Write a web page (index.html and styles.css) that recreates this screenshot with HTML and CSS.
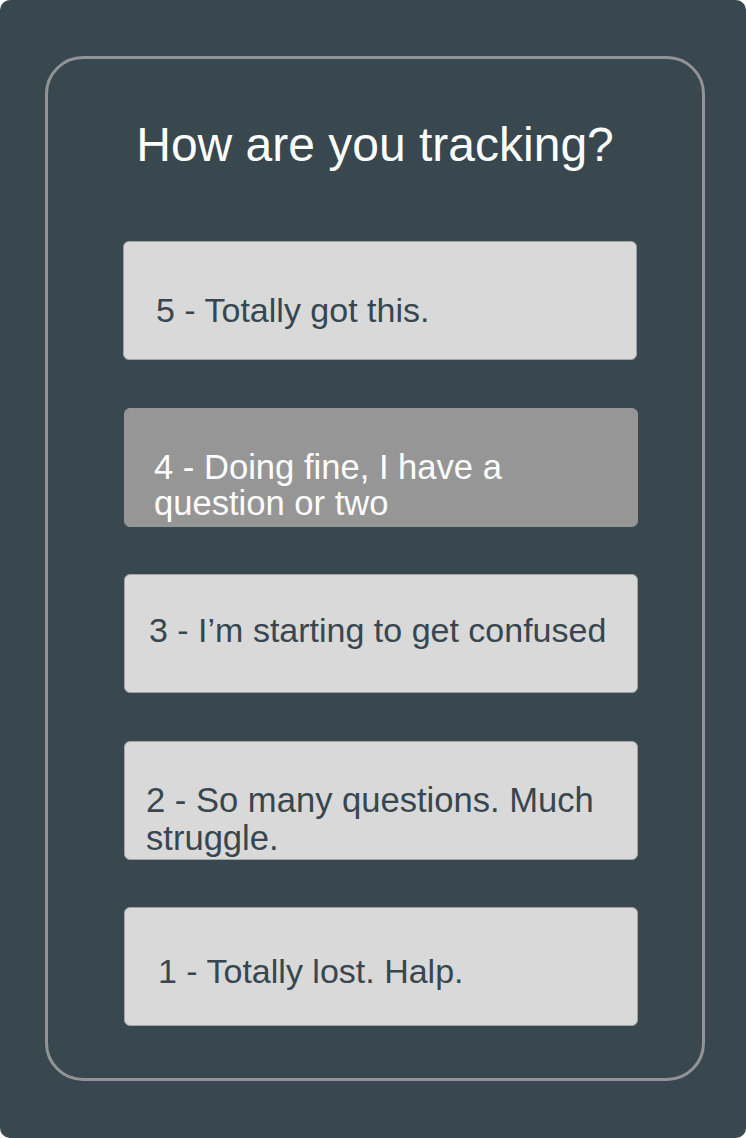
FILE: index.html
```html
<!DOCTYPE html>
<html lang="en">
<head>
<meta charset="utf-8">
<title>How are you tracking?</title>
<link rel="stylesheet" href="styles.css">
</head>
<body>
<div class="screen">
  <div class="frame">
    <h1 class="title">How are you tracking?</h1>
    <div class="options">
      <button class="option option--5"><span class="option__label">5 - Totally got this.</span></button>
      <button class="option option--4 option--active"><span class="option__label">4 - Doing fine, I have a question or two</span></button>
      <button class="option option--3"><span class="option__label">3 - I’m starting to get confused</span></button>
      <button class="option option--2"><span class="option__label">2 - So many questions. Much struggle.</span></button>
      <button class="option option--1"><span class="option__label">1 - Totally lost. Halp.</span></button>
    </div>
  </div>
</div>
</body>
</html>
```

FILE: styles.css
```css
html, body {
  margin: 0;
  padding: 0;
  background: #ffffff;
}

.screen {
  box-sizing: border-box;
  width: 746px;
  height: 1138px;
  background: #39474f;
  border-radius: 10px;
  padding: 56px 41px 57px 45px;
  font-family: "Liberation Sans", Arial, sans-serif;
}

.frame {
  box-sizing: border-box;
  height: 1025px;
  border: 3px solid #929394;
  border-radius: 38px;
  padding-top: 58px;
}

.title {
  margin: 0;
  font-size: 48px;
  font-weight: normal;
  line-height: 56px;
  color: #ffffff;
  text-align: center;
}

.options {
  display: flex;
  flex-direction: column;
  gap: 47.5px;
  margin-top: 68px;
  padding-left: 76px;
}

.option {
  box-sizing: border-box;
  display: flex;
  align-items: flex-start;
  width: 514px;
  height: 119px;
  margin: 0;
  border: 1px solid #a3a3a3;
  border-radius: 6px;
  background: #d9d9d9;
  color: #38474f;
  font-family: "Liberation Sans", Arial, sans-serif;
  font-size: 34px;
  line-height: 37px;
  text-align: left;
  padding-right: 20px;
  padding-bottom: 0;
  cursor: pointer;
}

.option__label {
  display: block;
}

.option--active {
  background: #969696;
  border-color: #969696;
  color: #ffffff;
}

.option--5 {
  margin-left: -1px;
  padding-top: 50px;
  padding-left: 32px;
}

.option--4 {
  font-size: 34.6px;
  line-height: 36px;
  padding-top: 40.4px;
  padding-left: 29px;
  padding-right: 82px;
}

.option--3 {
  padding-top: 37px;
  padding-left: 24px;
}

.option--2 {
  font-size: 34.6px;
  line-height: 38px;
  padding-top: 39px;
  padding-left: 21px;
}

.option--1 {
  padding-top: 44.5px;
  padding-left: 33px;
}
```
